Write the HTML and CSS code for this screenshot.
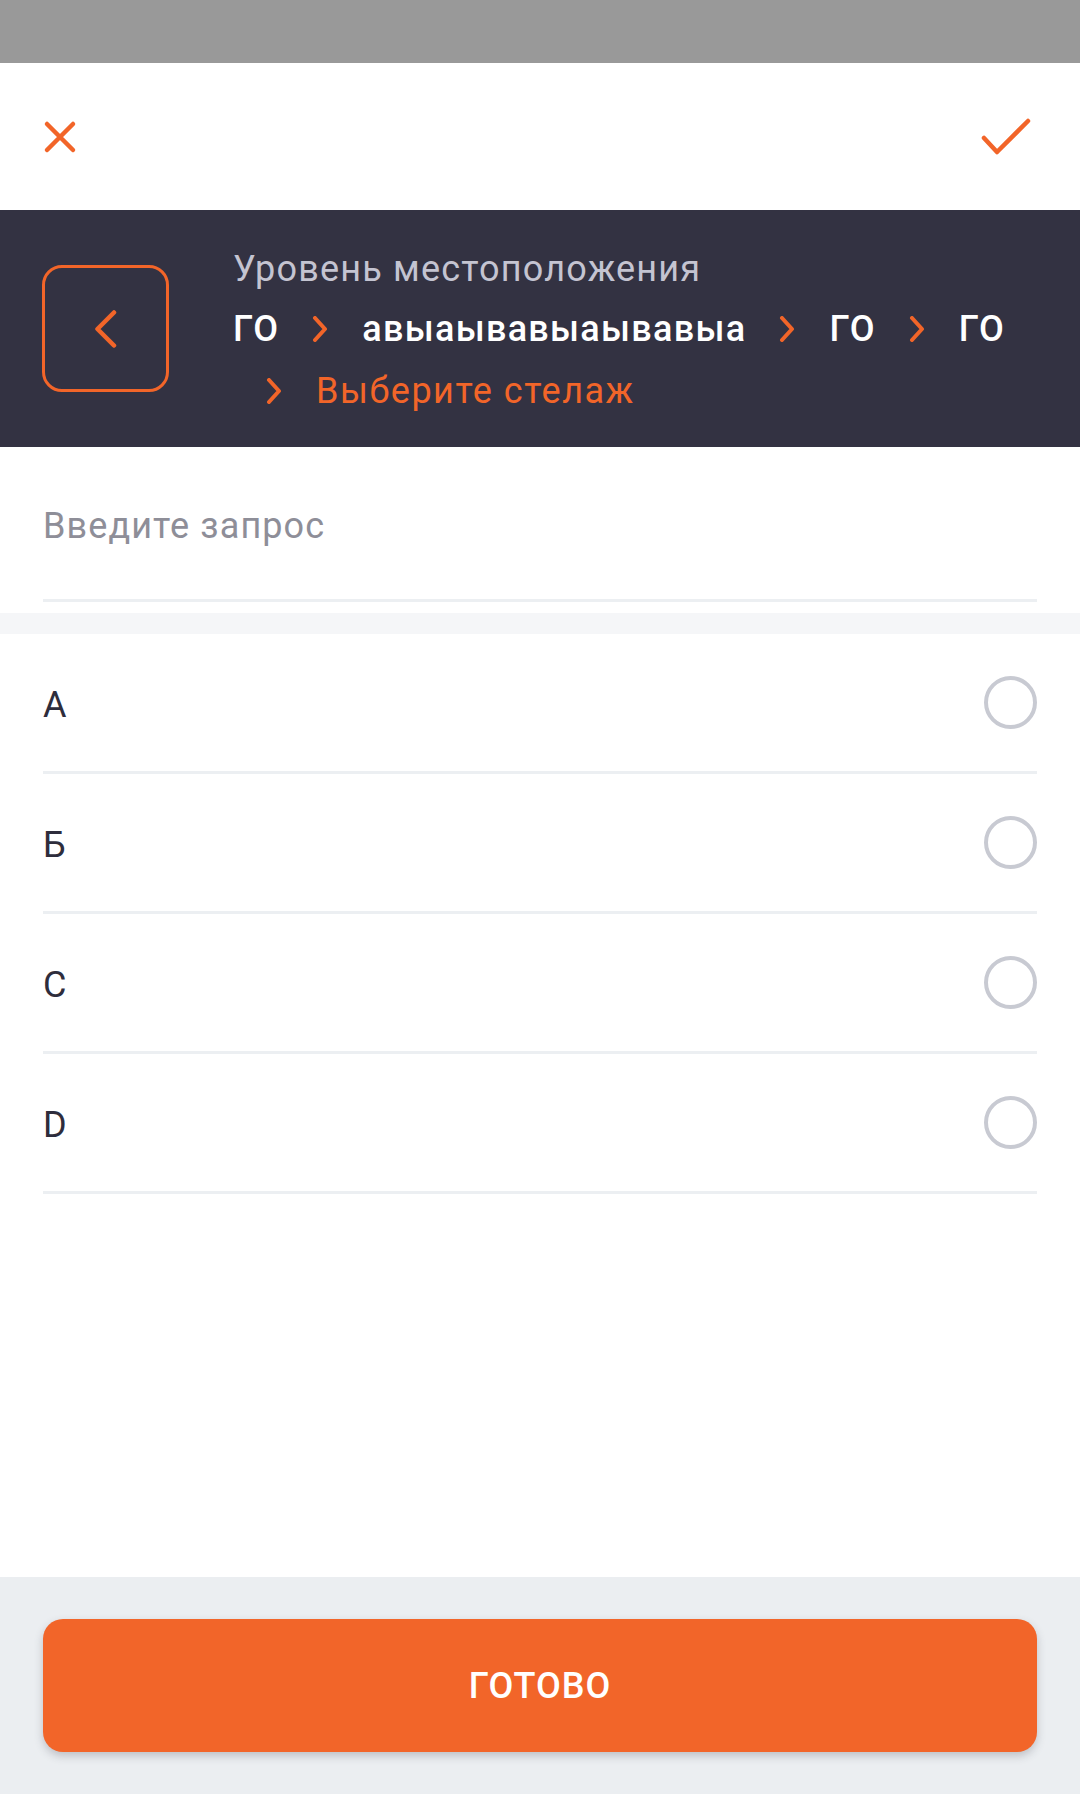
FILE: index.html
```html
<!DOCTYPE html>
<html lang="ru">
<head>
<meta charset="utf-8">
<link rel="stylesheet" href="styles.css">
</head>
<body>
<div class="screen">
  <div class="statusbar"></div>
  <div class="toolbar">
    <svg class="icon-close" width="34" height="34" viewBox="0 0 34 34"><path d="M4 4 L30 30 M30 4 L4 30" stroke="#f26529" stroke-width="4.5" stroke-linecap="round" fill="none"/></svg>
    <svg class="icon-check" width="52" height="38" viewBox="0 0 52 38"><path d="M4 20 L17 34 L48 3" stroke="#f26529" stroke-width="4.5" stroke-linecap="round" stroke-linejoin="round" fill="none"/></svg>
  </div>
  <div class="location">
    <div class="back-btn">
      <svg width="24" height="38" viewBox="0 0 24 38"><path d="M20 2.5 L3.5 19 L20 35.5" stroke="#f26529" stroke-width="4.5" stroke-linecap="round" stroke-linejoin="round" fill="none"/></svg>
    </div>
    <div class="loc-text">
      <div class="loc-title">Уровень местоположения</div>
      <div class="crumbs">
        <span class="crumb first">ГО</span>
        <span class="crumb"><svg class="sep" width="16" height="26" viewBox="0 0 16 26"><path d="M3 2 L13 13 L3 24" stroke="#f26529" stroke-width="4" stroke-linecap="round" stroke-linejoin="round" fill="none"/></svg>авыаывавыаывавыа</span>
        <span class="crumb"><svg class="sep" width="16" height="26" viewBox="0 0 16 26"><path d="M3 2 L13 13 L3 24" stroke="#f26529" stroke-width="4" stroke-linecap="round" stroke-linejoin="round" fill="none"/></svg>ГО</span>
        <span class="crumb"><svg class="sep" width="16" height="26" viewBox="0 0 16 26"><path d="M3 2 L13 13 L3 24" stroke="#f26529" stroke-width="4" stroke-linecap="round" stroke-linejoin="round" fill="none"/></svg>ГО</span>
        <span class="crumb current"><svg class="sep" width="16" height="26" viewBox="0 0 16 26"><path d="M3 2 L13 13 L3 24" stroke="#f26529" stroke-width="4" stroke-linecap="round" stroke-linejoin="round" fill="none"/></svg>Выберите стелаж</span>
      </div>
    </div>
  </div>
  <div class="search">
    <div class="search-field">Введите запрос</div>
  </div>
  <div class="strip"></div>
  <div class="list">
    <div class="row"><span class="row-label">A</span><span class="radio"></span></div>
    <div class="row"><span class="row-label">Б</span><span class="radio"></span></div>
    <div class="row"><span class="row-label">C</span><span class="radio"></span></div>
    <div class="row"><span class="row-label">D</span><span class="radio"></span></div>
  </div>
  <div class="spacer"></div>
  <div class="footer">
    <div class="done-btn">ГОТОВО</div>
  </div>
</div>
</body>
</html>
```
FILE: styles.css
```css
* { box-sizing: border-box; }
html, body { margin: 0; padding: 0; }
body {
  width: 1080px;
  height: 1794px;
  font-family: Roboto, "Noto Sans", sans-serif;
  background: #ffffff;
  overflow: hidden;
}
.screen {
  width: 1080px;
  height: 1794px;
  display: flex;
  flex-direction: column;
}
.statusbar {
  height: 63px;
  background: #999999;
  flex: none;
}
.toolbar {
  height: 147px;
  flex: none;
  display: flex;
  align-items: center;
  justify-content: space-between;
  padding: 0 48px 0 43px;
  background: #ffffff;
}
.icon-close { display: block; }
.icon-check { display: block; }
.location {
  height: 237px;
  flex: none;
  background: #333242;
  display: flex;
  align-items: flex-start;
  padding: 0 30px 0 42px;
}
.back-btn {
  width: 127px;
  height: 127px;
  margin-top: 55px;
  border: 3px solid #f26529;
  border-radius: 20px;
  display: flex;
  align-items: center;
  justify-content: center;
  flex: none;
}
.back-btn svg { display: block; }
.loc-text {
  margin-left: 64px;
  margin-top: 30px;
  flex: 1;
}
.loc-title {
  font-size: 36px;
  line-height: 58px;
  letter-spacing: 1.2px;
  color: #c4c4d1;
}
.crumbs {
  display: flex;
  flex-wrap: wrap;
  align-items: center;
}
.crumb {
  display: inline-flex;
  align-items: center;
  font-size: 36px;
  line-height: 62px;
  letter-spacing: 1.3px;
  font-weight: 500;
  color: #ffffff;
  margin-left: 33px;
  white-space: nowrap;
}
.crumb.first { margin-left: 0; }
.crumb .sep { margin-right: 34px; display: block; }
.crumb.current {
  color: #f26529;
  font-weight: 400;
  letter-spacing: 1.5px;
}
.search {
  flex: none;
  padding: 0 43px;
  background: #ffffff;
}
.search-field {
  height: 155px;
  padding-top: 48px;
  font-size: 36px;
  line-height: 62px;
  letter-spacing: 1.1px;
  color: #8e8e98;
  border-bottom: 3px solid #eceff2;
}
.strip {
  flex: none;
  height: 21px;
  margin-top: 11px;
  background: #f5f6f8;
}
.list {
  flex: none;
  padding: 0 43px;
}
.row {
  height: 140px;
  display: flex;
  align-items: center;
  justify-content: space-between;
  border-bottom: 3px solid #eceff2;
}
.row-label {
  font-size: 36px;
  color: #2e2d3c;
  margin-top: 4px;
}
.radio {
  width: 53px;
  height: 53px;
  border: 4px solid #c8cad2;
  border-radius: 50%;
  display: block;
}
.spacer { flex: 1; }
.footer {
  flex: none;
  height: 217px;
  background: #ebeef1;
  padding: 42px 43px 0;
}
.done-btn {
  height: 133px;
  background: #f26529;
  border-radius: 20px;
  box-shadow: 0 4px 8px rgba(60, 60, 70, 0.25);
  color: #ffffff;
  font-size: 36px;
  font-weight: 500;
  letter-spacing: 1px;
  display: flex;
  align-items: center;
  justify-content: center;
}
```
